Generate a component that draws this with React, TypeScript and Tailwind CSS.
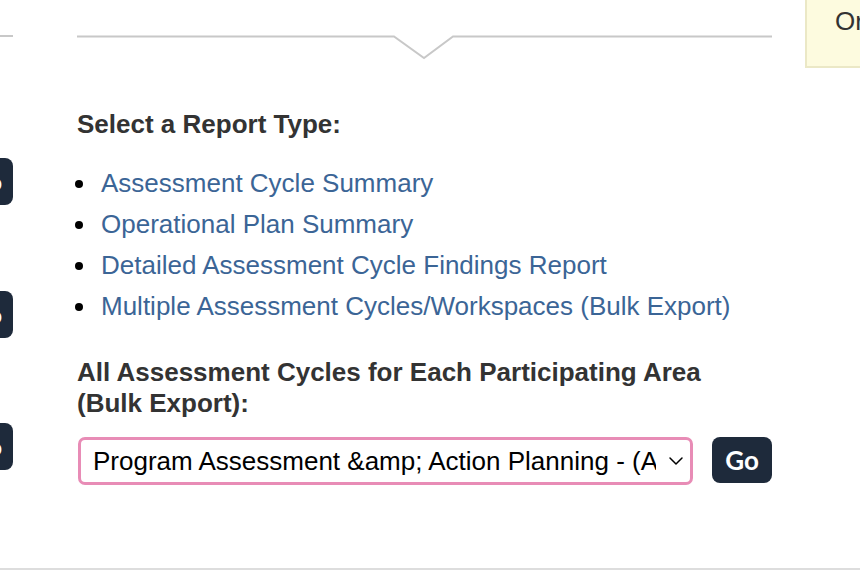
import { ChevronDown } from "lucide-react";

const reports = [
  "Assessment Cycle Summary",
  "Operational Plan Summary",
  "Detailed Assessment Cycle Findings Report",
  "Multiple Assessment Cycles/Workspaces (Bulk Export)",
];

function SideButton({ className }: { className: string }) {
  return (
    <div className={`flex justify-end ${className}`}>
      <button className="shrink-0 w-[54px] h-[47px] rounded-[8px] bg-[#1e2a3b] text-white text-[25px] font-bold font-['Lato',sans-serif] text-center">
        Go
      </button>
    </div>
  );
}

export default function App() {
  return (
    <div className="w-[860px] h-[586px] overflow-hidden bg-white font-['Liberation_Sans',Arial,sans-serif]">
      <div className="flex h-[570px] border-b-2 border-[#dddddd]">
        {/* neighbouring panel, cut off */}
        <div className="w-[13px] shrink-0 overflow-hidden flex flex-col">
          <div className="mt-[35px] h-[2px] bg-[#c8c8c8]" />
          <SideButton className="mt-[121px] w-[13px]" />
          <SideButton className="mt-[86px] w-[13px]" />
          <SideButton className="mt-[85px] w-[13px]" />
        </div>

        {/* report panel */}
        <div className="ml-[64px] w-[695px] shrink-0 flex flex-col pt-[35px]">
          <svg width="695" height="26" viewBox="0 0 695 26" className="block">
            <polyline
              points="0,1.5 317,1.5 347,23 376,1.5 695,1.5"
              fill="none"
              stroke="#c8c8c8"
              strokeWidth="2"
            />
          </svg>

          <h2 className="mt-[48px] text-[26px] leading-[31px] font-bold text-[#333333]">
            Select a Report Type:
          </h2>

          <ul className="mt-[23px]">
            {reports.map((r) => (
              <li key={r} className="flex items-center h-[41px]">
                <span className="-ml-[2px] w-[8px] h-[8px] rounded-full bg-black shrink-0" />
                <a href="#" className="ml-[18px] text-[26px] leading-[41px] text-[#3b6596]">
                  {r}
                </a>
              </li>
            ))}
          </ul>

          <h2 className="mt-[30px] text-[26px] leading-[31px] font-bold text-[#333333]">
            All Assessment Cycles for Each Participating Area
            <br />
            (Bulk Export):
          </h2>

          <div className="mt-[18px] flex items-start">
            <div className="relative w-[616px] h-[48px] ml-[1px]">
              <select className="appearance-none w-full h-full border-[3px] border-[#e88cb6] rounded-[7px] bg-white pl-[12px] pr-[34px] text-[26px] text-black outline-none">
                <option>Program Assessment &amp;amp; Action Planning - (All Cycles)</option>
              </select>
              <ChevronDown
                className="absolute right-[5px] top-[12px] pointer-events-none text-black"
                size={24}
                strokeWidth={1.5}
              />
            </div>
            <button className="ml-[19px] w-[60px] h-[46px] rounded-[8px] bg-[#1e2a3b] text-white text-[26px] font-bold font-['Lato',sans-serif]">
              Go
            </button>
          </div>
        </div>

        {/* help note, cut off */}
        <div className="ml-[33px] w-[80px] shrink-0 h-[68px] bg-[#fdfbdf] border-l-2 border-b-2 border-[#ebe8c6] pl-[28px] pt-[2px] overflow-hidden">
          <span className="text-[26px] text-[#333333] whitespace-nowrap">Or</span>
        </div>
      </div>
    </div>
  );
}
